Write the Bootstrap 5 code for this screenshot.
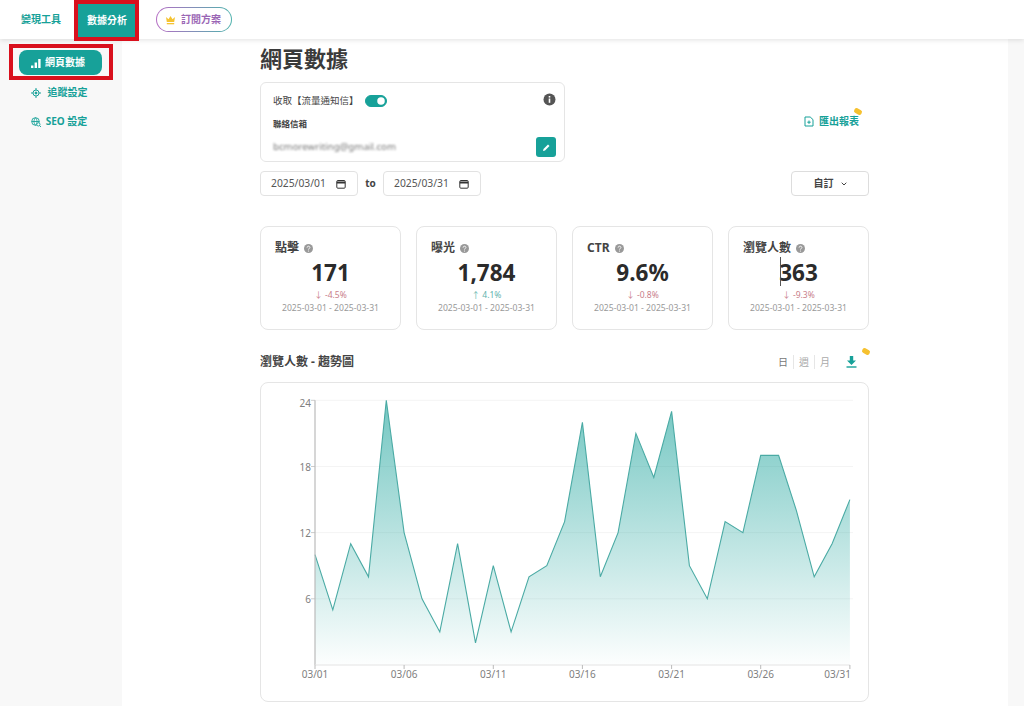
<!DOCTYPE html>
<html lang="zh-Hant">
<head>
    <meta charset="UTF-8">
    <meta name="viewport" content="width=device-width, initial-scale=1.0">
    <link rel="stylesheet" href="https://cdn.jsdelivr.net/npm/bootstrap@5.3.2/dist/css/bootstrap.min.css">
    <style>
        html, body { height: 706px; overflow: hidden; }
        body { font-family: "Noto Sans", "Noto Sans CJK TC", sans-serif; color: #333; background: #f8f8f8; font-size: 10px; }
        .text-teal { color: #17a199; }
        .topbar { height: 39px; background: #fff; box-shadow: 0 1px 5px rgba(0,0,0,.12); position: relative; z-index: 2; padding-left: 9px; }
        .top-link { width: 52px; height: 39px; padding-left: 12px; font-weight: 700; font-size: 10px; white-space: nowrap; }
        .top-active { width: 65px; height: 41px; padding-left: 1px; margin: 0 0 -2px 13px; background: #17a199; color: #fff; border: 4px solid #d9101d; }
        .plan-pill { margin: 7px 0 0 17px; height: 25px; width: 76px; padding-right: 2px; border-radius: 13px; border: 1px solid transparent; background: linear-gradient(#fff,#fff) padding-box, linear-gradient(90deg,#b56cc4,#4fb3ad) border-box; color: #9a66b5; font-weight: 700; font-size: 10px; gap: 5px; }
        .sidebar { width: 122px; flex-shrink: 0; padding-top: 5px; }
        .side-box { width: 104px; height: 36px; margin-left: 9px; border: 4px solid #d9101d; background: #f8f8f8; padding: 2px 7px 2px 6px; }
        .side-active { height: 25px; padding-right: 5px; background: #17a199; color: #fff; border-radius: 8px; font-weight: 700; font-size: 10px; gap: 4px; }
        .side-link { height: 29px; padding-right: 4px; font-weight: 700; font-size: 10px; gap: 7px; }
        .side-first { margin-top: -2px; }
        .main-area { width: 886px; height: 667px; background: #fff; flex-shrink: 0; }
        .content { width: 609px; margin-left: 138px; }
        .page-title { font-size: 22px; font-weight: 700; line-height: 30px; margin: 4px 0 9px; color: #3a3a3a; }
        .panel { border: 1px solid #e5e5e5; border-radius: 6px; background: #fff; }
        .notify { width: 305px; height: 80px; padding: 11px 8px 0 12px; }
        .notify-label { font-size: 9.5px; line-height: 14px; color: #444; }
        .info-icon { margin-top: -4px; }
        .form-switch .form-check-input.mini { width: 22px; height: 12px; margin: 0 0 0 6px; background-color: #17a199; border-color: #17a199; float: none; }
        .contact { font-size: 8.5px; font-weight: 700; margin: 10px 0 7px; line-height: 12px; color: #444; }
        .email { font-size: 9.7px; color: #777; filter: blur(.9px); }
        .edit-btn { width: 20px; height: 20px; background: #17a199; border-radius: 3px; }
        .export { font-size: 10px; font-weight: 700; gap: 5px; position: relative; margin: -2px 10px 0 0; }
        .badge-tag { position: absolute; width: 8px; height: 5px; background: #f6c12f; border-radius: 2px; transform: rotate(30deg); }
        .date-row { margin-top: 9px; }
        .date-field { width: 98px; height: 25px; border: 1px solid #e2e2e2; border-radius: 4px; font-size: 10.3px; color: #555; padding: 0 11px 0 10px; }
        .to-label { font-size: 10px; font-weight: 700; width: 25px; text-align: center; color: #444; }
        .custom-btn { width: 78px; height: 25px; border: 1px solid #ddd; border-radius: 4px; font-size: 10px; font-weight: 700; gap: 7px; color: #444; margin-left: auto; }
        .stats { display: grid; grid-template-columns: repeat(4, 141px); gap: 15px; margin-top: 30px; }
        .stat-card { height: 104px; border: 1px solid #e5e5e5; border-radius: 8px; padding: 13px 14px 0; position: relative; }
        .stat-title { font-size: 12px; font-weight: 700; line-height: 16px; gap: 5px; color: #444; }
        .stat-value { font-size: 22.5px; font-weight: 700; line-height: 30px; color: #2b2b2b; margin-top: 2px; text-align: center; position: relative; }
        .stat-delta { font-size: 8.5px; line-height: 12px; margin-top: 1px; text-align: center; }
        .delta-down { color: #c9808a; }
        .delta-up { color: #5fb3ae; }
        .stat-range { font-size: 8.6px; line-height: 13px; color: #999; text-align: center; white-space: nowrap; margin: 1px -6px 0; }
        .caret { position: absolute; left: 37px; top: -1px; height: 29px; border-left: 1px solid #555; }
        .chart-head { margin-top: 24px; height: 16px; margin-bottom: 12px; }
        .chart-title { font-size: 12px; font-weight: 700; color: #444; }
        .period { font-size: 10px; color: #aaa; }
        .period span { padding: 0 5px; line-height: 14px; border-left: 1px solid #e6e6e6; }
        .period span:first-child { border-left: 0; color: #777; }
        .dl-icon { margin: 0 12px 0 11px; }
        .chart-box { height: 320px; border-radius: 8px; }
        .chart-box svg { display: block; }
        .chart-box text { font-family: "Noto Sans", sans-serif; font-size: 10px; fill: #808080; }
    </style>
</head>
<body>

    <div class="topbar d-flex align-items-start">
        <a class="top-link text-teal d-flex align-items-center justify-content-center text-decoration-none" href="#">變現工具</a>
        <a class="top-link top-active d-flex align-items-center justify-content-center text-decoration-none" href="#">數據分析</a>
        <div class="plan-pill d-flex align-items-center justify-content-center">
            <svg width="11" height="10" viewBox="0 0 11 10"><path d="M1 2l2.5 2.2L5.5 1l2 3.2L10 2 9.2 7H1.8z" fill="#f5c332"/><rect x="1.8" y="8" width="7.4" height="1.3" fill="#f5c332"/></svg>
            訂閱方案
        </div>
    </div>

    <div class="d-flex">
        <div class="sidebar">
            <div class="side-box">
                <div class="side-active d-flex align-items-center justify-content-center">
                    <svg width="10" height="10" viewBox="0 0 10 10" fill="#fff"><rect x="0" y="7.5" width="2.4" height="2.5"/><rect x="3.6" y="4.5" width="2.4" height="5.5"/><rect x="7.2" y="1" width="2.4" height="9"/></svg>
                    網頁數據
                </div>
            </div>
            <div class="side-link side-first text-teal d-flex align-items-center justify-content-center">
                <svg width="10" height="10" viewBox="0 0 10 10" fill="none" stroke="#17a199"><circle cx="5" cy="5" r="3"/><circle cx="5" cy="5" r="1" fill="#17a199"/><path d="M5 0v2M5 8v2M0 5h2M8 5h2"/></svg>
                追蹤設定
            </div>
            <div class="side-link text-teal d-flex align-items-center justify-content-center">
                <svg width="10" height="10" viewBox="0 0 10 10" fill="none" stroke="#17a199" stroke-width=".9"><circle cx="4.5" cy="4.5" r="3.8"/><path d="M.7 4.5h7.6M4.5.7c-2 2.4-2 5.2 0 7.6M4.5.7c2 2.4 2 5.2 0 7.6"/><circle cx="7.4" cy="7.4" r="1.6" fill="#fff"/><path d="M8.5 8.5L10 10"/></svg>
                <span style="margin-left:-2px">SEO 設定</span>
            </div>
        </div>

        <div class="main-area">
            <div class="content">
                <h1 class="page-title">網頁數據</h1>

                <div class="d-flex justify-content-between align-items-center">
                    <div class="panel notify">
                        <div class="d-flex align-items-center justify-content-between">
                            <div class="d-flex align-items-center form-switch p-0">
                                <span class="notify-label">收取【流量通知信】</span>
                                <input class="form-check-input mini" type="checkbox" checked>
                            </div>
                            <svg class="info-icon" width="13" height="13" viewBox="0 0 13 13"><circle cx="6.5" cy="6.5" r="6" fill="#555"/><rect x="5.7" y="5.5" width="1.6" height="4.3" fill="#fff"/><rect x="5.7" y="3" width="1.6" height="1.6" fill="#fff"/></svg>
                        </div>
                        <p class="contact">聯絡信箱</p>
                        <div class="d-flex align-items-center justify-content-between">
                            <span class="email">bcmorewriting@gmail.com</span>
                            <div class="edit-btn d-flex align-items-center justify-content-center">
                                <svg width="9" height="9" viewBox="0 0 9 9"><path d="M1 8l.5-2L6 1.5 7.5 3 3 7.5z" fill="#fff"/></svg>
                            </div>
                        </div>
                    </div>
                    <div class="export text-teal d-flex align-items-center">
                        <svg width="10" height="11" viewBox="0 0 10 11" fill="none" stroke="#17a199"><path d="M1 1h5.2L9 3.6V10H1z"/><path d="M5 4.5v3.4M3.3 6.2h3.4"/></svg>
                        匯出報表
                        <span class="badge-tag" style="right:-3px;top:-5px"></span>
                    </div>
                </div>

                <div class="date-row d-flex align-items-center">
                    <div class="date-field d-flex align-items-center justify-content-between">
                        2025/03/01
                        <svg width="10" height="10" viewBox="0 0 10 10" fill="none" stroke="#333"><rect x=".8" y="1.5" width="8.4" height="7.7" rx="1"/><path d="M.8 3.5h8.4" stroke-width="2"/></svg>
                    </div>
                    <span class="to-label">to</span>
                    <div class="date-field d-flex align-items-center justify-content-between">
                        2025/03/31
                        <svg width="10" height="10" viewBox="0 0 10 10" fill="none" stroke="#333"><rect x=".8" y="1.5" width="8.4" height="7.7" rx="1"/><path d="M.8 3.5h8.4" stroke-width="2"/></svg>
                    </div>
                    <div class="custom-btn d-flex align-items-center justify-content-center">
                        自訂
                        <svg width="6" height="4" viewBox="0 0 6 4" fill="none" stroke="#444"><path d="M.7.7L3 3l2.3-2.3"/></svg>
                    </div>
                </div>

                <div class="stats" id="stats"></div>

                <div class="chart-head d-flex justify-content-between align-items-center">
                    <span class="chart-title">瀏覽人數 - 趨勢圖</span>
                    <div class="d-flex align-items-center position-relative">
                        <div class="period d-flex"><span>日</span><span>週</span><span>月</span></div>
                        <svg class="dl-icon" width="11" height="12" viewBox="0 0 11 12" fill="#17a199"><path d="M3.8 0h3.4v4.5H10L5.5 9 1 4.5h2.8z"/><rect x="0.5" y="10.3" width="10" height="1.4"/></svg>
                        <span class="badge-tag" style="right:-1px;top:-6px"></span>
                    </div>
                </div>

                <div class="panel chart-box" id="chart"></div>
            </div>
        </div>
    </div>

    <script>
        const stats = [
            { title: '點擊', value: '171', delta: '↓ -4.5%', up: false },
            { title: '曝光', value: '1,784', delta: '↑ 4.1%', up: true },
            { title: 'CTR', value: '9.6%', delta: '↓ -0.8%', up: false },
            { title: '瀏覽人數', value: '363', delta: '↓ -9.3%', up: false, caret: true }
        ];
        const help = '<svg width="9" height="9" viewBox="0 0 9 9"><circle cx="4.5" cy="4.5" r="4.5" fill="#999"/><path d="M3.1 3.6c0-1.9 2.8-1.9 2.8-.1 0 1-1.4 1-1.4 2.1" fill="none" stroke="#fff" stroke-width=".9"/><circle cx="4.5" cy="7" r=".6" fill="#fff"/></svg>';

        document.getElementById('stats').innerHTML = stats.map(s => `
            <div class="stat-card">
                <div class="stat-title d-flex align-items-center">${s.title} ${help}</div>
                <div class="stat-value">${s.caret ? '<span class="caret"></span>' : ''}${s.value}</div>
                <div class="stat-delta ${s.up ? 'delta-up' : 'delta-down'}">${s.delta}</div>
                <div class="stat-range">2025-03-01 - 2025-03-31</div>
            </div>`).join('');

        // chart coords are relative to the card (card starts at 261,383 inside its border)
        const data = [10,5,11,8,24,12,6,3,11,2,9,3,8,9,13,22,8,12,21,17,23,9,6,13,12,19,19,14,8,11,15];
        const x0 = 54, xStep = 17.83, y0 = 282, yUnit = 11.03;
        const px = i => +(x0 + i * xStep).toFixed(1);
        const py = v => +(y0 - v * yUnit).toFixed(1);
        const line = data.map((v, i) => `${px(i)},${py(v)}`).join(' ');
        const area = `${px(0)},${y0} ${line} ${px(30)},${y0}`;

        let svg = `<svg width="607" height="318" viewBox="0 0 607 318">
            <defs><linearGradient id="fade" x1="0" y1="0" x2="0" y2="1">
                <stop offset="0" stop-color="#17a199" stop-opacity=".6"/>
                <stop offset="1" stop-color="#17a199" stop-opacity=".01"/>
            </linearGradient></defs>`;
        [6, 12, 18, 24].forEach(v => {
            svg += `<line x1="${x0}" x2="592" y1="${py(v)}" y2="${py(v)}" stroke="#f4f4f4"/>`;
            svg += `<line x1="${x0 - 4}" x2="${x0}" y1="${py(v)}" y2="${py(v)}" stroke="#ccc"/>`;
            svg += `<text x="${x0 - 4}" y="${py(v) + (v === 24 ? 7 : 4)}" text-anchor="end">${v}</text>`;
        });
        svg += `<polygon points="${area}" fill="url(#fade)"/>`;
        svg += `<polyline points="${line}" fill="none" stroke="#4aaaa4" stroke-width="1.1"/>`;
        svg += `<line x1="${x0}" x2="${x0}" y1="${py(24)}" y2="${y0}" stroke="#bbb" stroke-width="1.2"/>`;
        svg += `<line x1="${x0}" x2="${px(30)}" y1="${y0}" y2="${y0}" stroke="#e4e4e4"/>`;
        [['03/01', 0], ['03/06', 5], ['03/11', 10], ['03/16', 15], ['03/21', 20], ['03/26', 25], ['03/31', 30]].forEach(([label, i]) => {
            svg += `<line x1="${px(i)}" x2="${px(i)}" y1="${y0}" y2="${y0 + 4}" stroke="#bbb"/>`;
            svg += `<text x="${i === 30 ? px(i) + 1 : px(i)}" y="${y0 + 13}" text-anchor="${i === 30 ? 'end' : 'middle'}">${label}</text>`;
        });
        document.getElementById('chart').innerHTML = svg + '</svg>';
    </script>
    <script src="https://cdn.jsdelivr.net/npm/bootstrap@5.3.2/dist/js/bootstrap.bundle.min.js"></script>
</body>
</html>
